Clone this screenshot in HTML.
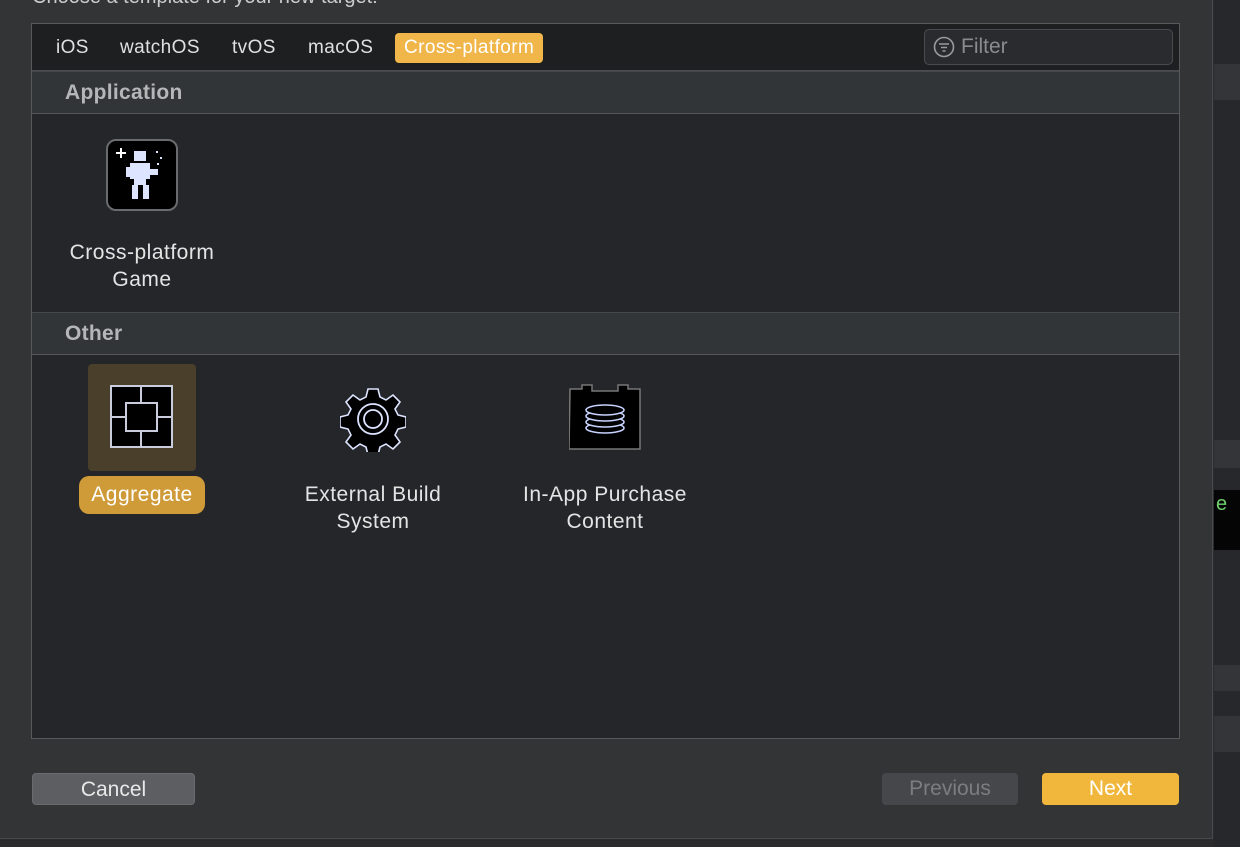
<!DOCTYPE html>
<html><head><style>
*{margin:0;padding:0;box-sizing:border-box}
body{width:1240px;height:847px;background:#2b2b2d;font-family:"Liberation Sans",sans-serif;position:relative;overflow:hidden;color:#dcdcdc}
.dlg{position:absolute;left:0;top:0;width:1213px;height:839px;background:#333436;border-right:1px solid #4a4a4c;border-bottom:1px solid #4a4a4c}
.panel{position:absolute;left:31px;top:23px;width:1149px;height:716px;background:#25262a;border:1px solid #58595b}
.tabs{position:absolute;left:0;top:0;width:100%;height:47px;background:#1e1f21;border-bottom:1px solid #4c4d50}
.tab{position:absolute;top:9px;height:30px;line-height:30px;font-size:19px;letter-spacing:0.4px;color:#e0e0e0}
.sel{background:#f0b64a;color:#fff;border-radius:4px;padding:0 9px}
.filter{position:absolute;left:892px;top:5px;width:249px;height:36px;border:1px solid #4a4b4e;border-radius:5px;background:#2a2b2e;color:#8a8b8e;font-size:21px;line-height:34px;padding-left:36px}
.sec{position:absolute;left:0;width:100%;height:43px;background:#323538;border-top:1px solid #45474a;border-bottom:1px solid #55575a;font-weight:bold;font-size:21px;color:#b5b6b8;padding-left:33px;line-height:41px;letter-spacing:0.3px}
.lbl{position:absolute;text-align:center;font-size:21px;letter-spacing:0.5px;line-height:27px;color:#e4e4e4}
.btn{position:absolute;top:773px;height:32px;border-radius:4px;font-size:21px;text-align:center;line-height:32px}
</style></head><body>
<div class="dlg"></div>
<div style="position:absolute;left:32px;top:-14px;font-size:20px;color:#ccc">Choose a template for your new target:</div>
<div style="position:absolute;left:1214px;top:0;width:26px;height:847px;background:#27282b"></div>
<div style="position:absolute;left:1214px;top:64px;width:26px;height:36px;background:#333539"></div>
<div style="position:absolute;left:1214px;top:490px;width:26px;height:60px;background:#050505;color:#6fcf6f;font-size:20px;padding-left:2px;line-height:28px">e</div>
<div style="position:absolute;left:1214px;top:440px;width:26px;height:28px;background:#333539"></div>
<div style="position:absolute;left:1214px;top:665px;width:26px;height:26px;background:#333539"></div>
<div style="position:absolute;left:1214px;top:716px;width:26px;height:36px;background:#333539"></div>
<div class="panel">
 <div class="tabs">
  <div class="tab" style="left:24px">iOS</div>
  <div class="tab" style="left:88px">watchOS</div>
  <div class="tab" style="left:200px">tvOS</div>
  <div class="tab" style="left:276px">macOS</div>
  <div class="tab sel" style="left:363px">Cross-platform</div>
  <div class="filter"><svg style="position:absolute;left:8px;top:6px" width="22" height="22" viewBox="0 0 22 22" fill="none" stroke="#9a9b9e" stroke-width="1.6"><circle cx="11" cy="11" r="9.5"/><path d="M6 8h10M8 11.5h6M9.5 15h3"/></svg>Filter</div>
 </div>
 <div class="sec" style="top:47px">Application</div>
 <div style="position:absolute;left:74px;top:115px;width:72px;height:72px;border-radius:10px;background:#000;border:2px solid #6a6b6e">
  <svg width="68" height="68" viewBox="0 0 68 68"><path d="M8 12h10M13 7v10" stroke="#fff" stroke-width="2"/><g fill="#dde4ff"><rect x="26" y="10" width="12" height="10"/><rect x="22" y="22" width="20" height="16"/><rect x="18" y="26" width="6" height="10"/><rect x="42" y="28" width="8" height="6"/><rect x="26" y="38" width="12" height="6"/><rect x="24" y="44" width="6" height="14"/><rect x="35" y="44" width="6" height="14"/><rect x="48" y="10" width="2" height="2"/><rect x="52" y="16" width="2" height="2"/><rect x="49" y="22" width="2" height="2"/></g></svg>
 </div>
 <div class="lbl" style="left:10px;top:215px;width:200px">Cross-platform<br>Game</div>
 <div class="sec" style="top:288px">Other</div>
 <div style="position:absolute;left:56px;top:340px;width:108px;height:107px;border-radius:4px;background:#4a3f2a"></div>
 <svg style="position:absolute;left:78px;top:361px" width="64" height="64" viewBox="0 0 64 64"><rect x="1" y="1" width="61" height="61" fill="#000" stroke="#c8ccdc" stroke-width="2"/><path d="M31 1v17M31 46v16M1 32h15M47 32h15" stroke="#c8ccdc" stroke-width="2"/><rect x="16" y="18" width="31" height="28" fill="#000" stroke="#c8ccdc" stroke-width="2"/></svg>
 <div class="lbl" style="left:47px;top:452px;width:126px;height:38px;line-height:38px;background:#cf9a38;border-radius:10px;color:#fff">Aggregate</div>
 <svg style="position:absolute;left:308px;top:362px" width="66" height="66" viewBox="-33 -33 66 66"><path fill="#000" stroke="#dde4ff" stroke-width="1.6" d="M-5 -30h10l2 8 6 3 7-5 7 7-5 7 3 6 8 2v10l-8 2-3 6 5 7-7 7-7-5-6 3-2 8h-10l-2-8-6-3-7 5-7-7 5-7-3-6-8-2v-10l8-2 3-6-5-7 7-7 7 5 6-3z"/><circle r="15" fill="none" stroke="#dde4ff" stroke-width="1.8"/><circle r="9" fill="none" stroke="#dde4ff" stroke-width="1.8"/></svg>
 <div class="lbl" style="left:240px;top:457px;width:202px">External Build<br>System</div>
 <svg style="position:absolute;left:537px;top:360px" width="74" height="66" viewBox="0 0 74 66"><path d="M1 5h12v-4h10v6h26v-6h10v4h12v60h-71z" fill="#000" stroke="#777" stroke-width="1.5"/><g fill="#000" stroke="#c8d2ff" stroke-width="1.6"><ellipse cx="36" cy="44" rx="19" ry="5"/><ellipse cx="36" cy="38" rx="19" ry="5"/><ellipse cx="36" cy="32" rx="19" ry="5"/><ellipse cx="36" cy="26" rx="19" ry="5"/></g></svg>
 <div class="lbl" style="left:463px;top:457px;width:220px">In-App Purchase<br>Content</div>
</div>
<div class="btn" style="left:32px;width:163px;background:#5d5e61;color:#e8e8e8;border:1px solid #6a6b6e">Cancel</div>
<div class="btn" style="left:882px;width:136px;background:#46474a;color:#7c7d80">Previous</div>
<div class="btn" style="left:1042px;width:137px;background:#f0b73c;color:#fff">Next</div>
</body></html>
